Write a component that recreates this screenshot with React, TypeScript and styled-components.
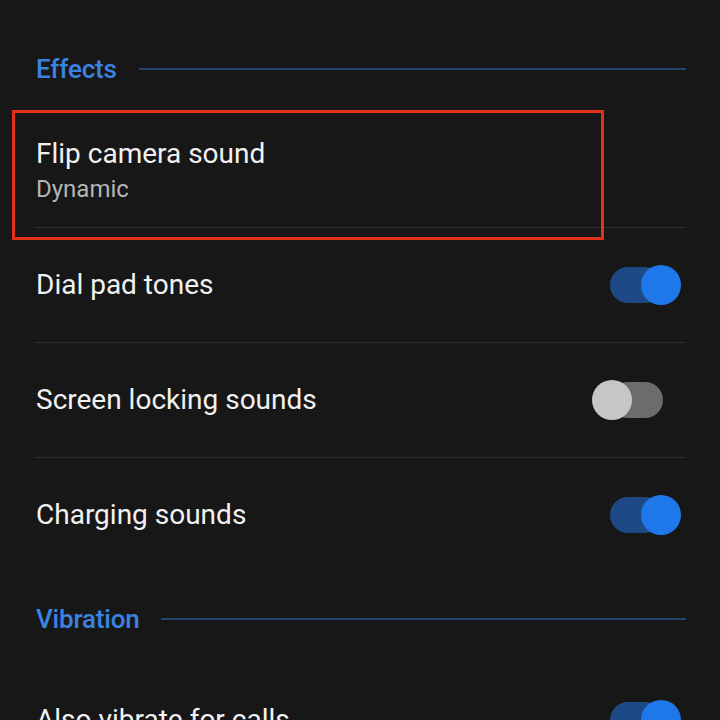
import React, { useState } from "react";
import styled, { createGlobalStyle } from "styled-components";

const GlobalStyle = createGlobalStyle`
  html, body {
    margin: 0;
    padding: 0;
    background: #171717;
  }
  body {
    font-family: Roboto, "Noto Sans", "Liberation Sans", sans-serif;
    -webkit-font-smoothing: antialiased;
  }
  * {
    box-sizing: border-box;
  }
`;

const Viewport = styled.div`
  width: 720px;
  height: 720px;
  overflow: hidden;
  background: #171717;
`;

// the list is scrolled, so the top sits above the window
const List = styled.div`
  margin-top: -89px;
  padding: 0 34px;
`;

const SectionHeader = styled.div<{ $top: number }>`
  display: flex;
  align-items: center;
  gap: 22px;
  height: 50px;
  margin: ${(p) => p.$top}px 0 19px;
  padding-left: 2px;
`;

const SectionTitle = styled.span`
  color: #3a83e0;
  font-size: 26px;
  font-weight: 500;
  letter-spacing: -0.2px;
`;

const SectionLine = styled.div`
  flex: 1;
  height: 2px;
  background: #274470;
`;

const Row = styled.div<{ $divider?: boolean; $h?: number }>`
  position: relative;
  display: flex;
  align-items: center;
  justify-content: space-between;
  height: ${(p) => p.$h ?? 115}px;
  padding: 0 5px 0 2px;
  border-bottom: 1px solid ${(p) => (p.$divider ? "#2c2c2c" : "transparent")};
  cursor: pointer;
`;

const TextBlock = styled.div`
  display: flex;
  flex-direction: column;
  gap: 4px;
`;

const Title = styled.span`
  color: #f1f1f1;
  font-size: 28px;
  line-height: 34px;
`;

const Subtitle = styled.span`
  color: #b5b5b5;
  font-size: 24px;
  line-height: 28px;
`;

const Highlight = styled.div`
  position: absolute;
  left: -22px;
  top: -3px;
  width: 592px;
  height: 130px;
  border: 3px solid #e3321c;
  pointer-events: none;
`;

const Track = styled.button<{ $on: boolean }>`
  position: relative;
  width: 53px;
  height: 36px;
  margin-right: 18px;
  padding: 0;
  border: none;
  border-radius: 18px;
  background: ${(p) => (p.$on ? "#1d4a87" : "#6c6c6c")};
  cursor: pointer;
`;

const Knob = styled.span<{ $on: boolean }>`
  position: absolute;
  top: -2px;
  left: ${(p) => (p.$on ? "31px" : "-18px")};
  width: 40px;
  height: 40px;
  border-radius: 50%;
  background: ${(p) => (p.$on ? "#1f78ea" : "#c6c6c6")};
`;

function Toggle({ initial }: { initial: boolean }) {
  const [on, setOn] = useState(initial);
  return (
    <Track $on={on} onClick={() => setOn(!on)} aria-pressed={on}>
      <Knob $on={on} />
    </Track>
  );
}

export default function App() {
  return (
    <Viewport>
      <GlobalStyle />
      <List>
        <Row $h={110}>
          <TextBlock>
            <Title>System sound</Title>
            <Subtitle>Always using</Subtitle>
          </TextBlock>
        </Row>

        <SectionHeader $top={23}>
          <SectionTitle>Effects</SectionTitle>
          <SectionLine />
        </SectionHeader>

        <Row $divider>
          <TextBlock>
            <Title>Flip camera sound</Title>
            <Subtitle>Dynamic</Subtitle>
          </TextBlock>
          <Highlight />
        </Row>
        <Row $divider>
          <Title>Dial pad tones</Title>
          <Toggle initial={true} />
        </Row>
        <Row $divider>
          <Title>Screen locking sounds</Title>
          <Toggle initial={false} />
        </Row>
        <Row>
          <Title>Charging sounds</Title>
          <Toggle initial={true} />
        </Row>

        <SectionHeader $top={21}>
          <SectionTitle>Vibration</SectionTitle>
          <SectionLine />
        </SectionHeader>

        <Row>
          <Title>Also vibrate for calls</Title>
          <Toggle initial={true} />
        </Row>
      </List>
    </Viewport>
  );
}
